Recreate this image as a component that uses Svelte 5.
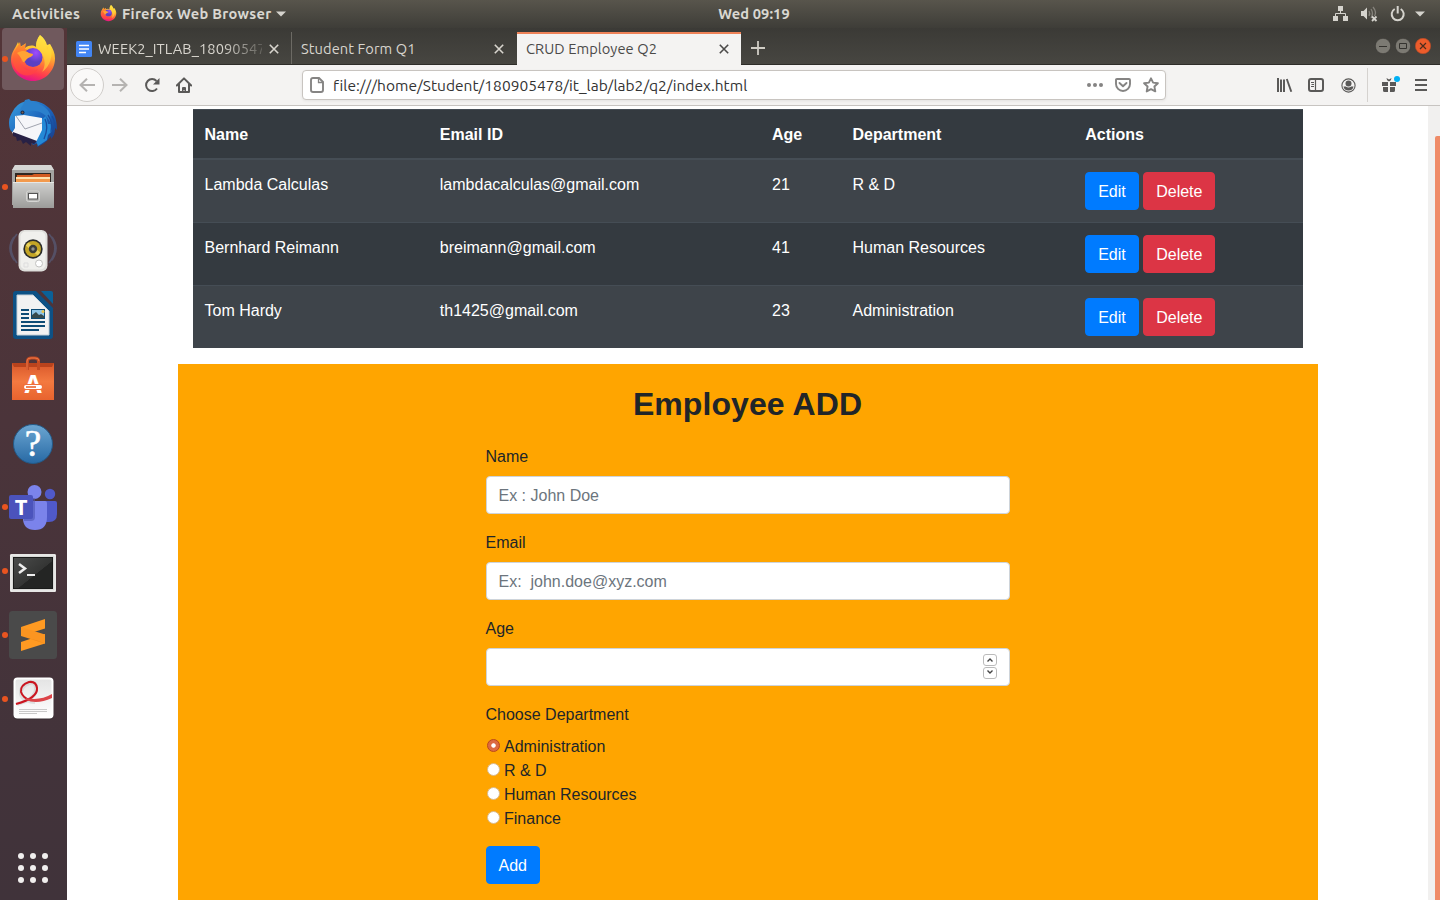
<script>
  const employees = [
    { name: 'Lambda Calculas', email: 'lambdacalculas@gmail.com', age: 21, dept: 'R & D' },
    { name: 'Bernhard Reimann', email: 'breimann@gmail.com', age: 41, dept: 'Human Resources' },
    { name: 'Tom Hardy', email: 'th1425@gmail.com', age: 23, dept: 'Administration' }
  ];
  const departments = ['Administration', 'R & D', 'Human Resources', 'Finance'];
  let chosen = $state('Administration');
  const dots = [3, 15, 27];
</script>

{#snippet cross()}
  <svg class="cross" width="10" height="10" viewBox="0 0 10 10"><path d="M.8.8l8.4 8.4M9.2.8L.8 9.2" fill="none" stroke="currentColor" stroke-width="1.6" /></svg>
{/snippet}

<div class="desktop">
  <header class="topbar">
    <span class="activities">Activities</span>
    <svg class="ff-small" width="17" height="17" viewBox="0 0 48 48"><use href="#firefox" /></svg>
    <span class="appname">Firefox Web Browser</span>
    <svg class="caret" width="10" height="6" viewBox="0 0 10 6"><path d="M0 .5h10L5 5.5z" fill="#d5d3cd" /></svg>
    <span class="clock">Wed 09:19</span>
    <div class="status">
      <svg width="16" height="16" viewBox="0 0 16 16" fill="#d5d3cd"><path d="M5 0h5v5H5zM0 10h5v5H0zM10 10h5v5h-5z" /><path d="M7.5 5v3M2.5 10V7.5h10V10" fill="none" stroke="#d5d3cd" /></svg>
      <svg width="17" height="16" viewBox="0 0 17 16"><path d="M0 5h2.5L6 1.5v12L2.5 10H0z" fill="#d5d3cd" /><path d="M8 5q1.5 2.5 0 5M10 3q3 4.5 0 9M12 1q4 5 1.5 9" fill="none" stroke="#85827b" stroke-width="1.3" /><path d="M11 10.5l4.5 4.5M15.5 10.5L11 15" stroke="#d5d3cd" stroke-width="1.8" /></svg>
      <svg width="16" height="16" viewBox="0 0 16 16" fill="none" stroke="#d5d3cd" stroke-width="2"><path d="M4.7 3a6 6 0 1 0 6 0M7.7 0v7.5" /></svg>
      <svg width="10" height="6" viewBox="0 0 10 6"><path d="M0 .5h10L5 5.5z" fill="#d5d3cd" /></svg>
    </div>
  </header>

  <div class="body">
    <aside class="dock">
      <div class="app active running">
        <svg width="48" height="48" viewBox="0 0 48 48">
          <defs>
            <linearGradient id="fx" x1=".75" y1="0" x2=".45" y2="1"><stop offset="0" stop-color="#fff44f" /><stop offset=".35" stop-color="#ffc22e" /><stop offset=".62" stop-color="#ff7139" /><stop offset=".82" stop-color="#ff3a4e" /><stop offset="1" stop-color="#e31587" /></linearGradient>
            <linearGradient id="fo" x1="0" y1="0" x2="0" y2="1"><stop offset="0" stop-color="#ff9a2b" /><stop offset=".5" stop-color="#ff6236" /><stop offset="1" stop-color="#ff3b4a" /></linearGradient>
            <radialGradient id="fp" cx=".65" cy=".25"><stop offset="0" stop-color="#a04bff" /><stop offset="1" stop-color="#5a40c4" /></radialGradient>
            <g id="firefox">
              <path d="M31 0c4 3 6 6 7 10l3-1c3 5 5 9 5 14.5C46 36 36 46 24 46S2 36 2 25c0-8 4-11 7-18l2 5 5-3v4c4-3 8-3 11-1 0-5 1-8 4-12z" fill="url(#fx)" />
              <path d="M5 17L11 7l1 5 5-4-1 6c3 1 5 2 7 4l-9 4-3 5c2 8 10 11 18 7-3 6-11 8-17 5C5 35 2 26 5 17z" fill="url(#fo)" />
              <circle cx="24" cy="22.5" r="9.5" fill="url(#fp)" />
              <path d="M8 18c5-3 10-2 12 0l4 1c0 3-4 3-6 5-2 1-1 3-4 3-2-4-3-6-6-9z" fill="#ffa334" />
              <path d="M31 0c5 5 7 10 7 15l3-6c4 11 0 23-8 28 4-6 3-13 0-18-2-4-6-5-6-9s2-7 4-10z" fill="#ffdc3d" opacity=".6" />
            </g>
            <linearGradient id="tb" x1="0" y1="0" x2="1" y2="1"><stop offset="0" stop-color="#3aa0df" /><stop offset=".5" stop-color="#1d66bd" /><stop offset="1" stop-color="#17357f" /></linearGradient>
            <linearGradient id="metal" x1="0" y1="0" x2="0" y2="1"><stop offset="0" stop-color="#d0d0ce" /><stop offset="1" stop-color="#9c9c9a" /></linearGradient>
            <linearGradient id="bag" x1="0" y1="0" x2="0" y2="1"><stop offset="0" stop-color="#d9582b" /><stop offset=".5" stop-color="#f37940" /><stop offset="1" stop-color="#e8632e" /></linearGradient>
            <linearGradient id="help" x1="0" y1="0" x2="0" y2="1"><stop offset="0" stop-color="#6ca6d2" /><stop offset="1" stop-color="#2769a4" /></linearGradient>
            <linearGradient id="paper" x1="0" y1="0" x2="0" y2="1"><stop offset="0" stop-color="#e4e4e4" /><stop offset="1" stop-color="#fff" /></linearGradient>
            <linearGradient id="term" x1="0" y1="0" x2="1" y2="1"><stop offset="0" stop-color="#4b4c4b" /><stop offset=".55" stop-color="#343534" /><stop offset=".56" stop-color="#242524" /></linearGradient>
          </defs>
          <use href="#firefox" />
        </svg>
      </div>
      <div class="app">
        <svg width="48" height="48" viewBox="0 0 48 48">
          <path d="M4 12C8 5 13 3 18 2c9-1 18 2 24 9 5 6 6 13 6 20l-2-2c0 5-1 8-4 11l0-3c-4 6-9 9-14 11l1-4-5 2-3-4-13-7C1 34 0 29 0 23c0-4 2-8 4-11z" fill="url(#tb)" />
          <path d="M14 6l2-5 4-1 3 3c8 1 15 5 18 12l1 10c-4-10-12-14-21-13-4 0-7 2-9 5-2-1-2-6 2-11z" fill="#2b80cc" />
          <path d="M33 20l4-3 2 8 3 0 1 7-4 4-1 5-9 6-2-5z" fill="#2489d6" />
          <path d="M39 16q5 7 3 17M36 20q4 8-1 20M43 17q4 7 2 14" fill="none" stroke="#194d9f" stroke-width="1.3" />
          <path d="M6 17l9-1 18 3v12l-6 12-24-9 3-5z" fill="#f5f6f9" />
          <path d="M7 17l9 13 17-6" fill="none" stroke="#a0a4af" />
          <path d="M4 33l24 9-3 3-3-1v3l-5-4-3 2-2-4-4 1-1-4-3-1z" fill="#272145" />
          <circle cx="13.5" cy="13.5" r="2" fill="#172d50" /><circle cx="13.5" cy="13.5" r="1" fill="#80604c" />
        </svg>
      </div>
      <div class="app running">
        <svg width="48" height="48" viewBox="0 0 48 48">
          <path d="M6 2h36l3 5v35H3V7z" fill="#a3a3a1" /><path d="M6 2h36l3 5H3z" fill="#d6d6d4" />
          <path d="M6 10h36v12H6z" fill="#302722" /><path d="M8 12h15l2-1h16v8H7z" fill="#d35b22" /><path d="M7 14h34v2H7z" fill="#ffe1ae" /><path d="M7 16h34v3H7z" fill="#f39a4d" />
          <path d="M4 19h40l1 2v24H4z" fill="url(#metal)" /><path d="M4 19.5h41" stroke="#e7e7e5" />
          <rect x="17.500" y="28" width="13" height="10.500" rx="2" fill="#b4b4b2" stroke="#d5d5d3" /><rect x="19.500" y="30.500" width="9" height="5.500" fill="#fff" stroke="#555" />
        </svg>
      </div>
      <div class="app">
        <svg width="48" height="48" viewBox="0 0 48 48">
          <path d="M8 7Q-4 21 8 36M5 10Q-3 21 5 33M40 7q12 14 0 29M43 10q8 11 0 23" fill="none" stroke="#5b6b91" stroke-width="1.8" opacity=".5" />
          <rect x="9.5" y="3" width="29" height="41.5" rx="6" fill="#dededb" /><rect x="11.5" y="4.5" width="25" height="38" rx="5" fill="#f0f0ed" />
          <circle cx="24" cy="22" r="9.7" fill="#2a2c2b" /><circle cx="24" cy="22" r="8" fill="#c3a526" /><path d="M18 17l12 10" stroke="#e9d15a" stroke-width="4" /><circle cx="24" cy="22" r="4.2" fill="#3c3d38" /><circle cx="24" cy="22" r="1.7" fill="#8e918d" />
          <circle cx="30" cy="36.5" r="3.5" fill="#fff" stroke="#c2c2c0" /><path d="M15 36h4v4h-4z" fill="none" stroke="#ddd" />
        </svg>
      </div>
      <div class="app">
        <svg width="48" height="48" viewBox="0 0 48 48">
          <path d="M7 0h20l17 17v28q0 3-3 3H7q-3 0-3-3V3q0-3 3-3z" fill="#0d5185" /><path d="M32 0h10q2 0 2 2v11z" fill="#0b6198" />
          <path d="M8 4h16l16 16v24H8z" fill="#f2f2f2" stroke="#c5d0d8" />
          <path d="M12 19h8M12 23h8M12 27h8M12 31h24M12 35h24M12 39h18" stroke="#0d4b75" stroke-width="2" />
          <rect x="22.5" y="18.5" width="13" height="9" fill="#8fc5e7" stroke="#0d4b75" /><path d="M23 27v-3l4-3 3 3 2-1 3 2v2z" fill="#374a4c" /><circle cx="34" cy="20.5" r="1.5" fill="#eac54b" />
        </svg>
      </div>
      <div class="app">
        <svg width="48" height="48" viewBox="0 0 48 48">
          <path d="M3 8h42v37H3z" fill="url(#bag)" /><path d="M3 8h42l-2 4H5z" fill="#b9431d" />
          <path d="M18.5 15V6q0-3 4-3h3q4 0 4 3v9" fill="none" stroke="#c34b23" stroke-width="3" /><path d="M18 15V6q0-3 4-3h4q4 0 4 3" fill="none" stroke="#ed7747" />
          <text x="24" y="38" text-anchor="middle" font-family="Open Sans" font-size="25" font-weight="700" fill="#fff">A</text>
          <rect x="14" y="29" width="20" height="6" fill="#f0703a" /><rect x="15" y="30" width="18" height="4" rx="2" fill="#fff" /><path d="M17 32h10" stroke="#e96630" stroke-width="1.6" />
        </svg>
      </div>
      <div class="app">
        <svg width="48" height="48" viewBox="0 0 48 48">
          <circle cx="24" cy="25" r="19.5" fill="url(#help)" stroke="#235986" />
          <text x="24" y="37" text-anchor="middle" font-family="Liberation Serif" font-size="37" fill="#fff" stroke="#fff" stroke-width=".6">?</text>
        </svg>
      </div>
      <div class="app running">
        <svg width="48" height="48" viewBox="0 0 48 48">
          <circle cx="41" cy="11" r="5.2" fill="#5059c9" /><path d="M35 18h11q2 0 2 2v11q0 8-8 8h-5z" fill="#5059c9" />
          <circle cx="25.5" cy="9" r="7" fill="#7b83eb" /><path d="M15 18h21q2 0 2 2v14q0 13-12 13T14 35V19z" fill="#7b83eb" /><path d="M15 15h11v19q0 4-4 4h-7z" fill="#4f56b4" opacity=".6" />
          <rect y="12" width="24" height="24" rx="2" fill="#4b53bc" />
          <text x="12" y="31.5" text-anchor="middle" font-family="Open Sans" font-size="22" font-weight="700" fill="#fff">T</text>
        </svg>
      </div>
      <div class="app running">
        <svg width="48" height="48" viewBox="0 0 48 48">
          <rect x="1" y="7" width="46" height="38" rx="1.5" fill="#d9d9d7" /><rect x="2" y="8" width="44" height="36" fill="none" stroke="#f5f5f4" /><rect x="4.5" y="10.5" width="39" height="31" fill="url(#term)" stroke="#1a1b1a" />
          <path d="M10 17l6 4.5-6 4.5" fill="none" stroke="#eee" stroke-width="2.5" /><path d="M18 28h8" stroke="#eee" stroke-width="2" />
        </svg>
      </div>
      <div class="app running">
        <svg width="48" height="48" viewBox="0 0 48 48">
          <rect width="48" height="48" rx="3.5" fill="#4a4a4a" />
          <path d="M12 31l24-8v9.5L12 40z" fill="#ff9a22" /><path d="M12 16L36 8v9.5L12 25z" fill="#ff9a22" /><path d="M12 16l24 7.5v9L12 25z" fill="#fb9521" /><path d="M20 27.5l16 5-8-3z" fill="#dc7b16" opacity=".6" />
        </svg>
      </div>
      <div class="app running">
        <svg width="48" height="48" viewBox="0 0 48 48">
          <rect x="4.5" y="3.5" width="40" height="41" rx="4" fill="#222" opacity=".4" /><rect x="4.5" y="2.5" width="40" height="41" rx="4" fill="#fff" /><rect x="6.5" y="4.5" width="36" height="37" rx="2" fill="url(#paper)" />
          <path d="M8 29Q28 24 27 12q-1-6-7-4-9 3-8 11c1 6 10 8 14 8" fill="none" stroke="#bfc1c1" stroke-width="4" opacity=".4" />
          <path d="M7 29Q29 23 28 13q-1-7-8-6-9 3-8 10 2 6 9 8" fill="none" stroke="#cb1520" stroke-width="2" /><path d="M17 23q14 3 26-4v4q-15 7-26 2z" fill="#dc4448" />
          <path d="M10 34.5h28M10 36.5h28M10 38.5h18" stroke="#c9c9c9" />
        </svg>
      </div>
      <div class="launcher">
        <svg width="30" height="30" viewBox="0 0 30 30" fill="#f1efee">
          {#each dots as y}{#each dots as x}<circle cx={x} cy={y} r="3" />{/each}{/each}
        </svg>
      </div>
    </aside>

    <div class="window">
      <div class="tabs">
        <div class="tab first">
          <svg width="16" height="16" viewBox="0 0 16 16"><rect width="16" height="16" rx="1.5" fill="#4285f4" /><path d="M3 4.5h10M3 8h10M3 11.5h7" stroke="#fff" stroke-width="1.7" /></svg>
          <span class="fade">WEEK2_ITLAB_18090547</span>{@render cross()}
        </div>
        <div class="tab second"><span>Student Form Q1</span>{@render cross()}</div>
        <div class="tab current"><span>CRUD Employee Q2</span>{@render cross()}</div>
        <svg class="plus" width="14" height="14" viewBox="0 0 14 14"><path d="M7 0v14M0 7h14" stroke="#d0cdc5" stroke-width="1.8" /></svg>
        <div class="controls">
          <svg width="16" height="16" viewBox="0 0 16 16"><circle cx="8" cy="8" r="7.7" fill="#7c7a73" stroke="#34332f" stroke-width=".6" /><path d="M4 8.5h8" stroke="#34332f" /></svg>
          <svg width="16" height="16" viewBox="0 0 16 16"><circle cx="8" cy="8" r="7.7" fill="#7c7a73" stroke="#34332f" stroke-width=".6" /><path d="M4.5 5.5h7v5h-7z" fill="none" stroke="#34332f" /></svg>
          <svg width="16" height="16" viewBox="0 0 16 16"><circle cx="8" cy="8" r="7.7" fill="#ec5c2b" stroke="#b94a26" stroke-width=".6" /><path d="M5 5l6 6M11 5l-6 6" stroke="#4a2c1d" stroke-width="1.2" /></svg>
        </div>
      </div>

      <div class="toolbar">
        <div class="back"><svg width="16" height="14" viewBox="0 0 16 14"><path d="M16 7H2M8 .8L1.5 7 8 13.2" fill="none" stroke="#b5b3b1" stroke-width="2" /></svg></div>
        <svg class="fwd" width="16" height="14" viewBox="0 0 16 14"><path d="M0 7h14M8 .8L14.5 7 8 13.2" fill="none" stroke="#b5b3b1" stroke-width="2" /></svg>
        <svg class="reload" width="16" height="16" viewBox="0 0 16 16"><path d="M12.5 4A6 6 0 1 0 13 11.5" fill="none" stroke="#5a5958" stroke-width="2" /><path d="M15.5 1v6.5H9z" fill="#5a5958" /></svg>
        <svg class="home" width="16" height="16" viewBox="0 0 16 16"><path d="M.8 8.5L8 1.4l7.2 7.1M3 7v8h10V7" fill="none" stroke="#5a5958" stroke-width="2" stroke-linejoin="round" stroke-linecap="round" /><path d="M6 15v-4q0-1 1-1h2q1 0 1 1v4H8.5v-2h-1v2z" fill="#5a5958" /></svg>
        <div class="url">
          <svg width="14" height="16" viewBox="0 0 14 16"><path d="M3 1h6l4 4v8q0 2-2 2H3q-2 0-2-2V3q0-2 2-2z" fill="none" stroke="#858483" stroke-width="1.9" /><path d="M8.5 1v4.5H13" fill="none" stroke="#858483" stroke-width="1.3" /></svg>
          <span class="address">file:///home/Student/180905478/it_lab/lab2/q2/index.html</span>
          <svg width="16" height="4" viewBox="0 0 16 4" fill="#858483"><circle cx="2" cy="2" r="2" /><circle cx="8" cy="2" r="2" /><circle cx="14" cy="2" r="2" /></svg>
          <svg class="pocket" width="16" height="14" viewBox="0 0 16 14" fill="none" stroke="#858483" stroke-width="1.9"><path d="M2 1h12q1 0 1 1v4a7 7 0 0 1-14 0V2q0-1 1-1z" /><path d="M4.5 5L8 8.3 11.5 5" stroke-linecap="round" stroke-linejoin="round" /></svg>
          <svg class="star" width="16" height="16" viewBox="0 0 16 16"><path d="M8 1.3l2.1 4.3 4.8.6-3.5 3.3.9 4.9L8 12.1l-4.3 2.3.9-4.9L1.1 6.2l4.800-.6z" fill="none" stroke="#858483" stroke-width="1.9" stroke-linejoin="round" /></svg>
        </div>
        <div class="tools">
          <svg width="16" height="14" viewBox="0 0 16 14"><path d="M1 0v14M4 1.5V14M7 1.5V14" stroke="#5a5958" stroke-width="2" /><path d="M9.8 1L14.3 13.7" stroke="#5a5958" stroke-width="1.9" /></svg>
          <svg class="sidebar" width="16" height="14" viewBox="0 0 16 14"><rect x="1" y="1" width="14" height="12" rx="2" fill="none" stroke="#5a5958" stroke-width="2" /><path d="M7.5 1v12" stroke="#5a5958" stroke-width="1.2" /><path d="M3 4.500h3M3.500 6.500H6M3 8.500h3" stroke="#5a5958" /></svg>
          <svg class="account" width="15" height="15" viewBox="0 0 15 15"><circle cx="7.5" cy="7.5" r="6.6" fill="none" stroke="#5a5958" stroke-width="1.1" /><circle cx="7.5" cy="5.5" r="3" fill="#5a5958" /><path d="M2.5 8.6h2.3q2.7 2 5.4 0h2.3q-.6 4-5 4t-5-4z" fill="#5a5958" /></svg>
          <i class="sep"></i>
          <svg class="gift" width="19" height="18" viewBox="0 0 19 18"><path d="M0 6h6v4H0zM8 6h6v4H8zM1 11h5v5H2.5Q1 16 1 14.5zM8 11h5v3.5q0 1.5-1.5 1.5H8z" fill="#5a5958" /><path d="M4.5 2Q5 6 7 5q2 1 2.500-3L7 3.5z" fill="#5a5958" /><circle cx="15" cy="3" r="3" fill="#00b0f4" /></svg>
          <svg class="menu" width="12" height="12" viewBox="0 0 12 12"><path d="M0 1h12M0 6h12M0 11h12" stroke="#5a5958" stroke-width="2" /></svg>
        </div>
      </div>

      <div class="viewport">
        <main>
          <div class="tablewrap">
            <table>
              <colgroup><col class="c1" /><col class="c2" /><col class="c3" /><col class="c4" /><col /></colgroup>
              <thead><tr><th>Name</th><th>Email ID</th><th>Age</th><th>Department</th><th>Actions</th></tr></thead>
              <tbody>
                {#each employees as e}
                  <tr>
                    <td>{e.name}</td><td>{e.email}</td><td>{e.age}</td><td>{e.dept}</td>
                    <td><div class="actions"><button class="btn edit">Edit</button><button class="btn delete">Delete</button></div></td>
                  </tr>
                {/each}
              </tbody>
            </table>
          </div>
          <section class="add">
            <h1>Employee ADD</h1>
            <form>
              <label for="name">Name</label>
              <input id="name" class="field" placeholder="Ex : John Doe" />
              <label for="email">Email</label>
              <input id="email" class="field" placeholder="Ex:  john.doe@xyz.com" />
              <label for="age">Age</label>
              <div class="field number">
                <input id="age" />
                <div class="spin">
                  <svg width="14" height="12" viewBox="0 0 14 12"><rect x=".5" y=".5" width="13" height="11" rx="2.5" fill="#fff" stroke="#bbb" /><path d="M4.5 7.5L7 5l2.5 2.5" fill="none" stroke="#444" stroke-width="1.4" /></svg>
                  <svg width="14" height="12" viewBox="0 0 14 12"><rect x=".5" y=".5" width="13" height="11" rx="2.5" fill="#fff" stroke="#bbb" /><path d="M4.5 3.5L7 6l2.500-2.500" fill="none" stroke="#444" stroke-width="1.4" /></svg>
                </div>
              </div>
              <span class="legend">Choose Department</span>
              <div class="radios">
                {#each departments as d}
                  <label class="radio"><input type="radio" name="dept" value={d} bind:group={chosen} />{d}</label>
                {/each}
              </div>
              <button type="button" class="btn edit">Add</button>
            </form>
          </section>
        </main>
        <div class="scrollbar"><div class="thumb"></div></div>
      </div>
    </div>
  </div>
</div>

<style>
  :global(body) { margin: 0; overflow: hidden; }
  .desktop, .desktop * { box-sizing: border-box; }
  .desktop { width: 1440px; height: 900px; display: flex; flex-direction: column; overflow: hidden; font-family: Ubuntu, "Noto Sans", sans-serif; }
  svg { display: block; flex: none; }
  .topbar { position: relative; height: 28px; flex: none; display: flex; align-items: center; padding: 0 15px 1px 12px; background: linear-gradient(#58554c, #3e3d38); color: #d9d7d1; font-size: 14.667px; font-weight: 700; white-space: nowrap; }
  .activities { width: 68px; letter-spacing: .3px; }
  .ff-small { margin: 0 5px 0 20px; }
  .appname { width: 149px; letter-spacing: .3px; }
  .caret { margin-left: 5px; }
  .clock { position: absolute; left: 0; right: 0; text-align: center; padding-left: 68px; letter-spacing: .1px; }
  .status { margin-left: auto; display: flex; align-items: center; gap: 12px; }
  .status svg:last-child { margin-left: -3px; }
  .body { flex: 1; display: flex; min-height: 0; }
  .dock { width: 67px; flex: none; display: flex; flex-direction: column; gap: 2px; padding-left: 2px; background: linear-gradient(#533538, #4b343a 45%, #42333a 85%, #40333a); }
  .app { position: relative; width: 62px; height: 62px; flex: none; border-radius: 4px; display: flex; align-items: center; justify-content: center; }
  .app.active { background: #70595d; }
  .running::before { content: ""; position: absolute; left: 0; top: 28px; width: 6px; height: 6px; border-radius: 50%; background: #e95420; }
  .launcher { margin-top: auto; height: 59px; width: 65px; margin-left: -2px; padding: 12px 0 0 18px; }
  .window { flex: 1; min-width: 0; display: flex; flex-direction: column; background: #fff; }
  .tabs { height: 37px; flex: none; display: flex; align-items: stretch; padding-top: 4px; background: linear-gradient(#3b3a36, #474641); border-bottom: 1px solid #2e2d29; color: #d8d5ce; font-size: 14.667px; letter-spacing: .07px; white-space: nowrap; }
  .tab { width: 225px; display: flex; align-items: center; padding: 2px 13px 0 9px; }
  .tab span { flex: 1; line-height: 24px; }
  .first { border-right: 1px solid #6c6a64; padding-right: 12px; }
  .first span { margin: 0 7px 0 6px; min-width: 0; }
  .fade { mask-image: linear-gradient(90deg, #000 76%, #0003 100%); }
  .current { width: 224px; padding-right: 12px; background: #f4f3f2; color: #4b4a49; border-top: 2px solid #ee8258; margin-bottom: -1px; padding-top: 0; }
  .current span { margin-top: -1px; }
  .current :global(.cross) { margin-top: -1px; }
  .plus { margin: 9px 0 0 10px; }
  .controls { display: flex; gap: 4px; margin: 6px 9px 0 auto; }
  .toolbar { height: 41px; flex: none; display: flex; align-items: center; padding-left: 3px; border-bottom: 1px solid #c7c4c1; background: #f4f3f2; }
  .back { width: 34px; height: 34px; border: 1px solid #d0cdca; border-radius: 50%; background: #faf9f8; display: grid; place-items: center; }
  .fwd { margin-left: 8px; }
  .reload { margin-left: 16px; }
  .home { margin-left: 16px; }
  .url { width: 864px; height: 30px; margin-left: 110px; border: 1px solid #c8c4c0; border-radius: 4px; background: #fff; box-shadow: 0 1px 3px #0001; display: flex; align-items: center; padding: 0 6px 0 7px; }
  .address { flex: 1; margin-left: 9px; font-size: 15.5px; letter-spacing: .03px; color: #333; white-space: nowrap; }
  .pocket { margin: 0 12px; }
  .tools { display: flex; align-items: center; margin-left: 111px; }
  .sidebar { margin-left: 15px; }
  .account { margin-left: 17px; }
  .sep { width: 1px; height: 34px; background: #d5d2cf; margin: 0 14px 0 11px; }
  .gift { margin-top: -1px; }
  .menu { margin-left: 14px; }
  .viewport { flex: 1; min-height: 0; display: flex; overflow: hidden; font-family: "Liberation Sans", Arial, sans-serif; font-size: 16px; line-height: 24px; color: #212529; }
  main { width: 1140px; margin: 3px 110.5px 0 110.5px; flex: none; }
  .tablewrap { padding: 0 15px 16px; }
  table { width: 1110px; table-layout: fixed; border-collapse: separate; border-spacing: 0; background: #343a40; color: #fff; }
  .c1 { width: 235.3px; } .c2 { width: 332.2px; } .c3 { width: 80.5px; } .c4 { width: 232.7px; }
  th { height: 51px; padding: 12px 12px 10px; line-height: 26px; text-align: left; border-top: 1px solid #454d55; border-bottom: 2px solid #454d55; }
  td { height: 63px; padding: 12px; line-height: 26px; vertical-align: top; border-top: 1px solid #454d55; }
  tbody tr:first-child td { border-top: 0; height: 62px; }
  tbody tr:nth-child(odd) { background: #3e444a; }
  .actions { display: flex; gap: 4.45px; }
  .btn { height: 38px; padding: 7px 12px 5px; border: 1px solid transparent; border-radius: 4px; color: #fff; font: inherit; line-height: 24px; }
  .edit { background: #007bff; border-color: #007bff; }
  .delete { background: #dc3545; border-color: #dc3545; }
  .add { height: 560px; background: orange; padding-top: 21px; }
  h1 { margin: 0 0 22px; font-size: 32px; line-height: 38px; letter-spacing: .08px; text-align: center; font-weight: 700; }
  form { width: 524px; margin: 0 auto; }
  form > label, .legend { display: block; margin-bottom: 7px; }
  .field { display: block; width: 100%; height: 38px; margin-bottom: 17px; padding: 7px 12px 5px; border: 1px solid #ced4da; border-radius: 4px; background: #fff; font: inherit; line-height: 24px; }
  .field::placeholder { color: #6c757d; opacity: 1; }
  .number { display: flex; align-items: center; }
  .number input { flex: 1; border: 0; padding: 0; outline: 0; background: transparent; }
  .spin { display: grid; gap: 1px; margin-top: -4px; }
  .legend { margin-bottom: 8px; }
  .radios { margin-bottom: 15px; }
  .radio { display: flex; height: 24px; }
  .radio input { appearance: none; width: 13px; height: 13px; margin: 4px 4.500px 0 1px; border-radius: 50%; border: 1px solid #d9b98a; background: #fff; }
  .radio input:checked { border: 1px solid #b9461d; background: radial-gradient(circle, #fff 0 1.8px, #dc6a42 2.6px); }
  .scrollbar { width: 12px; background: #f1f0ef; padding: 30px 0 0 7px; }
  .thumb { height: 780px; background: #ef8b67; border-radius: 2px 0 0; }
</style>
